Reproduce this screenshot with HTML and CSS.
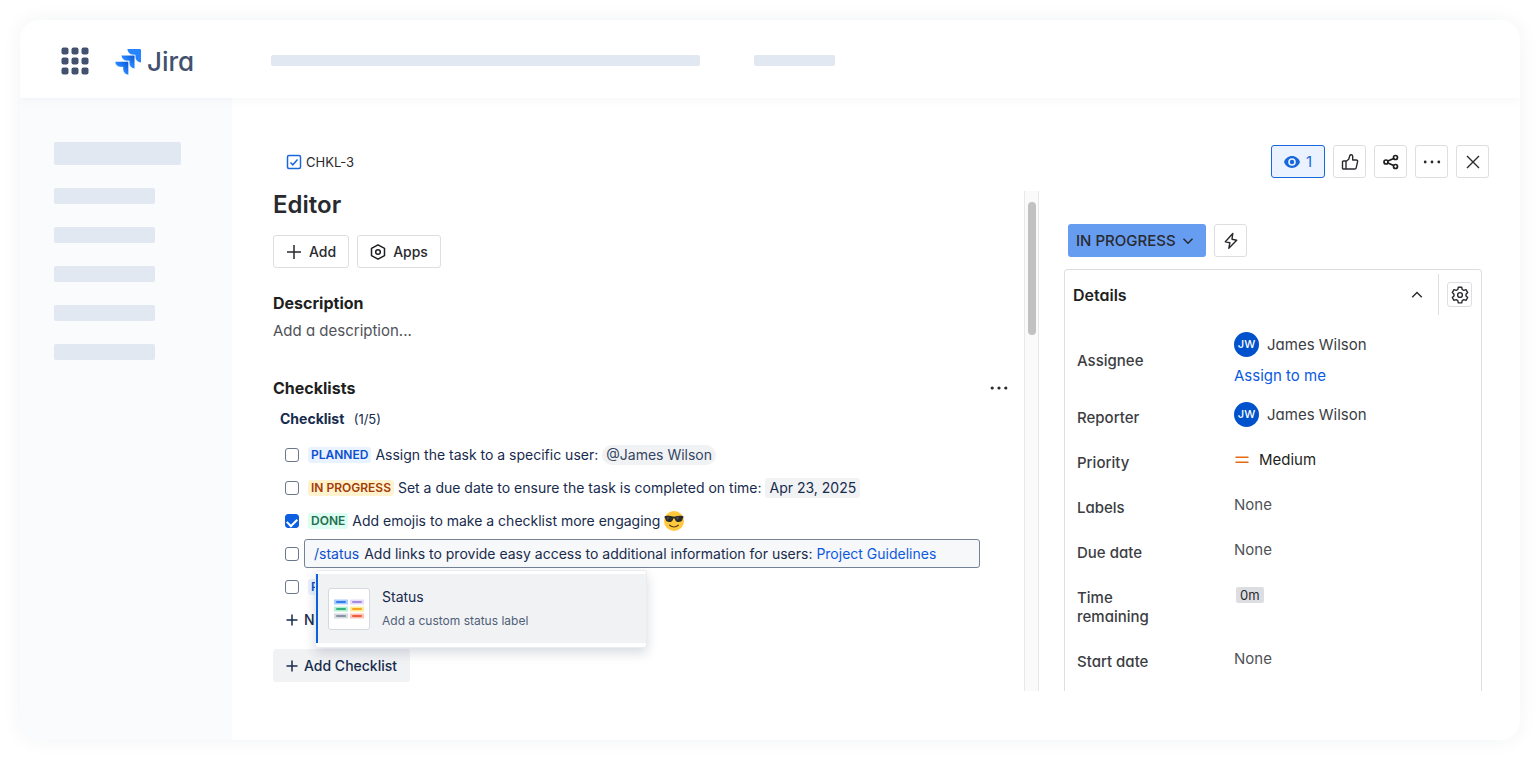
FILE: index.html
```html
<!DOCTYPE html>
<html lang="en">
<head>
<meta charset="utf-8">
<meta name="viewport" content="width=device-width, initial-scale=1">
<title>CHKL-3 Editor - Jira</title>
<link rel="stylesheet" href="styles.css">
</head>
<body>
<div class="frame">
  <header class="topbar">
    <button class="switcher" aria-label="App switcher">
      <svg width="28" height="28" viewBox="0 0 28 28" fill="#42526e">
        <rect x="0.5" y="0.5" width="7" height="7" rx="2"/><rect x="10.5" y="0.5" width="7" height="7" rx="2"/><rect x="20.5" y="0.5" width="7" height="7" rx="2"/>
        <rect x="0.5" y="10.5" width="7" height="7" rx="2"/><rect x="10.5" y="10.5" width="7" height="7" rx="2"/><rect x="20.5" y="10.5" width="7" height="7" rx="2"/>
        <rect x="0.5" y="20.5" width="7" height="7" rx="2"/><rect x="10.5" y="20.5" width="7" height="7" rx="2"/><rect x="20.5" y="20.5" width="7" height="7" rx="2"/>
      </svg>
    </button>
    <a class="logo" href="#">
      <svg width="26" height="26" viewBox="0 0 24 24" aria-hidden="true">
        <defs>
          <linearGradient id="g1" x1="18" y1="6" x2="12.500" y2="12" gradientUnits="userSpaceOnUse"><stop offset="0.150" stop-color="#0f5bd6"/><stop offset="1" stop-color="#2684ff"/></linearGradient>
          <linearGradient id="g2" x1="12.500" y1="12" x2="6" y2="18" gradientUnits="userSpaceOnUse"><stop offset="0.150" stop-color="#0f5bd6"/><stop offset="1" stop-color="#2684ff"/></linearGradient>
        </defs>
        <path fill="#2684ff" d="M23.013 0H11.455a5.215 5.215 0 0 0 5.215 5.215h2.129v2.057A5.215 5.215 0 0 0 24 12.483V1.005A1.001 1.001 0 0 0 23.013 0Z"/>
        <path fill="url(#g1)" stroke="#fff" stroke-width="0.500" d="M17.294 5.757H5.736a5.215 5.215 0 0 0 5.215 5.214h2.129v2.058a5.218 5.218 0 0 0 5.215 5.214V6.758a1.001 1.001 0 0 0-1.001-1.001z"/>
        <path fill="url(#g2)" stroke="#fff" stroke-width="0.500" d="M11.571 11.513H0a5.218 5.218 0 0 0 5.232 5.215h2.130v2.057A5.215 5.215 0 0 0 12.575 24V12.518a1.005 1.005 0 0 0-1.005-1.005z"/>
      </svg>
      <span>Jira</span>
    </a>
    <span class="bar bar-search"></span>
    <span class="bar bar-menu"></span>
  </header>

  <div class="body">
    <nav class="sidebar" aria-label="Project">
      <span class="bar bar-title"></span>
      <span class="bar bar-item"></span>
      <span class="bar bar-item"></span>
      <span class="bar bar-item"></span>
      <span class="bar bar-item"></span>
      <span class="bar bar-item"></span>
    </nav>

    <main class="issue">
      <div class="issue-top">
        <a class="issue-key" href="#">
          <svg width="16" height="16" viewBox="0 0 16 16" fill="none" stroke="#1868db"><rect x="1.500" y="1.500" width="13" height="13" rx="1.500" stroke-width="1.500"/><path d="M4.500 8.500l2.300 2.300L11.500 5.500" stroke-width="1.500"/></svg>
          CHKL-3
        </a>
        <div class="actions">
          <button class="btn watch" aria-label="Watchers: 1">
            <svg width="16" height="16" viewBox="0 0 16 16"><path fill="#1868db" fill-rule="evenodd" d="M8 2C4.200 2 1.300 4.600.200 7.400a1.600 1.600 0 0 0 0 1.200C1.300 11.400 4.200 14 8 14s6.700-2.600 7.800-5.400a1.600 1.600 0 0 0 0-1.200C14.700 4.600 11.800 2 8 2zm0 2.200a3.800 3.800 0 1 1 0 7.600 3.800 3.800 0 0 1 0-7.600z"/><circle cx="8" cy="8" r="2.200" fill="#1868db"/></svg>
            <span>1</span>
          </button>
          <button class="btn square" aria-label="Vote">
            <svg width="18" height="18" viewBox="0 0 18 18" fill="none" stroke="#292a2e" stroke-width="1.400" stroke-linejoin="round"><path d="M1.500 9a1 1 0 0 1 1-1H5v8H2.500a1 1 0 0 1-1-1zM5 8.500l2.700-2.200 1.100-3.600a1.500 1.500 0 0 1 2.900.500V7h3.600a1.300 1.300 0 0 1 1.300 1.600l-1.400 6.200A1.500 1.500 0 0 1 13.700 16H5"/></svg>
          </button>
          <button class="btn square" aria-label="Share">
            <svg width="16" height="16" viewBox="0 0 16 16" fill="none" stroke="#1e1f21" stroke-width="1.700"><circle cx="3" cy="8" r="2"/><circle cx="12.500" cy="3.500" r="2"/><circle cx="12.500" cy="12.500" r="2"/><path d="M4.900 7.100l5.800-2.700M4.900 8.900l5.800 2.700"/></svg>
          </button>
          <button class="btn square" aria-label="More actions">
            <svg width="18" height="18" viewBox="0 0 18 18" fill="#292a2e"><circle cx="2.200" cy="9" r="1.400"/><circle cx="9" cy="9" r="1.400"/><circle cx="15.800" cy="9" r="1.400"/></svg>
          </button>
          <button class="btn square" aria-label="Close">
            <svg width="14" height="14" viewBox="0 0 14 14" stroke="#292a2e" stroke-width="1.400"><path d="M1 1l12 12M13 1L1 13"/></svg>
          </button>
        </div>
      </div>

      <div class="columns">
        <section class="work">
          <h1>Editor</h1>
          <div class="buttons">
            <button class="btn labelled">
              <svg width="16" height="16" viewBox="0 0 16 16" stroke="#292a2e" stroke-width="1.500"><path d="M8 1v14M1 8h14"/></svg>
              Add
            </button>
            <button class="btn labelled">
              <svg width="16" height="16" viewBox="0 0 16 16" fill="none" stroke="#1e1f21" stroke-width="1.500" stroke-linejoin="round"><path d="M8 .8l6.500 3.600v7.200L8 15.200 1.500 11.600V4.400z"/><circle cx="8" cy="8" r="2.300"/></svg>
              Apps
            </button>
          </div>

          <h2>Description</h2>
          <p class="placeholder">Add a description...</p>

          <div class="section-head">
            <h2>Checklists</h2>
            <button class="plain" aria-label="Checklist actions">
              <svg width="18" height="18" viewBox="0 0 18 18" fill="#292a2e"><circle cx="2.200" cy="9" r="1.600"/><circle cx="9" cy="9" r="1.600"/><circle cx="15.800" cy="9" r="1.600"/></svg>
            </button>
          </div>

          <div class="checklist">
            <h3>Checklist <span class="count">(1/5)</span></h3>
            <ul>
              <li>
                <input type="checkbox" id="c1">
                <label for="c1"><span class="tag planned">PLANNED</span>Assign the task to a specific user: <span class="mention">@James Wilson</span></label>
              </li>
              <li>
                <input type="checkbox" id="c2">
                <label for="c2"><span class="tag progress">IN PROGRESS</span>Set a due date to ensure the task is completed on time: <span class="date">Apr 23, 2025</span></label>
              </li>
              <li>
                <input type="checkbox" id="c3" checked>
                <label for="c3"><span class="tag done">DONE</span>Add emojis to make a checklist more engaging
                  <svg class="emoji" role="img" aria-label="Smiling face with sunglasses" width="20" height="20" viewBox="0 0 20 20"><circle cx="10" cy="10" r="10" fill="#ffc83d"/><path d="M.600 5.200c3-.700 6-.500 8.300.300.700.200 1.500.200 2.200 0 2.300-.800 5.300-1 8.300-.300v1.500c-.5.300-.7.800-.8 1.400-.4 2.200-1.700 3-3.900 3-2.300 0-3.300-1.200-3.900-3.200-.2-.8-1.400-.8-1.600 0-.6 2-1.600 3.200-3.900 3.200-2.200 0-3.500-.8-3.900-3-.1-.6-.3-1.100-.8-1.400z" fill="#2b2b2b"/><path d="M3 6.500l2.500-.4-2 3zM12.500 6.500l2.500-.4-2 3z" fill="#5c5c5c"/><path d="M5.700 14.200c2.500 2.100 6.100 2.100 8.600 0" fill="none" stroke="#5a3b1a" stroke-width="1.200" stroke-linecap="round"/></svg></label>
              </li>
              <li class="editing">
                <input type="checkbox" id="c4" aria-label="Add links">
                <div class="field" role="textbox" contenteditable="true" aria-label="Checklist item"><span class="command">/status</span>Add links to provide easy access to additional information for users: <a href="#">Project Guidelines</a></div>
                <div class="popup" role="listbox">
                  <div class="option" role="option" aria-selected="true">
                    <span class="thumb">
                      <svg width="30" height="20" viewBox="0 0 30 20">
                        <rect width="14" height="5" y="0.500" fill="#a8ccff"/><rect x="2" y="2" width="10" height="2" rx="1" fill="#357de8"/>
                        <rect x="16" width="14" height="5" y="0.500" fill="#e5dcfb"/><rect x="18" y="2" width="10" height="2" rx="1" fill="#a58be6"/>
                        <rect width="14" height="5" y="7.500" fill="#b5f0d5"/><rect x="2" y="9" width="10" height="2" rx="1" fill="#36b37e"/>
                        <rect x="16" width="14" height="5" y="7.500" fill="#ffeb9c"/><rect x="18" y="9" width="10" height="2" rx="1" fill="#f5a623"/>
                        <rect width="14" height="5" y="14.500" fill="#d5d9e0"/><rect x="2" y="16" width="10" height="2" rx="1" fill="#8993a5"/>
                        <rect x="16" width="14" height="5" y="14.500" fill="#ffc2b5"/><rect x="18" y="16" width="10" height="2" rx="1" fill="#f15b3e"/>
                      </svg>
                    </span>
                    <span class="option-text"><span class="option-name">Status</span><span class="option-hint">Add a custom status label</span></span>
                  </div>
                </div>
              </li>
              <li>
                <input type="checkbox" id="c5">
                <label for="c5"><span class="tag planned">PLANNED</span></label>
              </li>
            </ul>
            <button class="plain new-item">
              <svg width="12" height="12" viewBox="0 0 12 12" stroke="#172b4d" stroke-width="1.500"><path d="M6 .5v11M.5 6h11"/></svg>
              New item
            </button>
          </div>
          <button class="add-checklist">
            <svg width="12" height="12" viewBox="0 0 12 12" stroke="#172b4d" stroke-width="1.500"><path d="M6 .5v11M.5 6h11"/></svg>
            Add Checklist
          </button>
        </section>

        <div class="scroll-track" aria-hidden="true"><div class="scroll-thumb"></div></div>

        <aside class="side">
          <div class="status-row">
            <div class="status">
              <select aria-label="Status"><option>IN PROGRESS</option></select>
              <svg width="12" height="12" viewBox="0 0 12 12" fill="none" stroke="#292a2e" stroke-width="1.500"><path d="M1.500 3.800L6 8.300l4.500-4.500"/></svg>
            </div>
            <button class="btn square" aria-label="Automation">
              <svg width="16" height="18" viewBox="0 0 16 18" fill="none" stroke="#292a2e" stroke-width="1.400" stroke-linejoin="round"><path d="M9.800 1.500L2.300 9.700l4.600 1L5.800 16.300 13.700 8.200 9 7.200z"/></svg>
            </button>
          </div>
          <section class="details">
            <header class="details-head">
              <h2>Details</h2>
              <button class="plain" aria-label="Collapse details"><svg width="12" height="12" viewBox="0 0 12 12" fill="none" stroke="#292a2e" stroke-width="1.400"><path d="M1.200 8.200L6 3.400l4.800 4.800"/></svg></button>
              <span class="divider"></span>
              <button class="btn gear" aria-label="Configure">
                <svg width="18" height="18" viewBox="0 0 18 18" fill="none" stroke="#292a2e" stroke-width="1.400" stroke-linejoin="round"><path d="M7.300 1.200h3.400l.5 2.300 1.600.900 2.200-.700 1.700 2.900-1.700 1.600v1.700l1.700 1.600-1.700 2.900-2.200-.700-1.600.900-.5 2.300H7.300l-.5-2.300-1.600-.900-2.200.700-1.700-2.900L3 9.900V8.200L1.300 6.600 3 3.700l2.200.700 1.600-.900z"/><circle cx="9" cy="9" r="2.400"/></svg>
              </button>
            </header>
            <dl>
              <div class="assignee">
                <dt>Assignee</dt>
                <dd><span class="user"><span class="avatar">JW</span>James Wilson</span><a href="#">Assign to me</a></dd>
              </div>
              <div><dt>Reporter</dt><dd><span class="user"><span class="avatar">JW</span>James Wilson</span></dd></div>
              <div><dt>Priority</dt><dd class="priority"><svg width="16" height="16" viewBox="0 0 16 16" stroke="#e56910" stroke-width="1.600"><path d="M1.500 5.200h13M1.500 10.200h13"/></svg>Medium</dd></div>
              <div><dt>Labels</dt><dd class="none">None</dd></div>
              <div><dt>Due date</dt><dd class="none">None</dd></div>
              <div><dt>Time remaining</dt><dd><span class="time">0m</span></dd></div>
              <div><dt>Start date</dt><dd class="none">None</dd></div>
            </dl>
          </section>
        </aside>
      </div>
    </main>
  </div>
</div>
</body>
</html>
```
FILE: styles.css
```css
* { box-sizing: border-box; }

body {
  margin: 0;
  padding: 20px;
  background: #fff;
  color: #292a2e;
  font: 15px/20px Inter, "Liberation Sans", sans-serif;
  font-feature-settings: "cv11";
}

h1, h2, h3, p, ul, dl, dd { margin: 0; }
ul { padding: 0; list-style: none; }
a { color: #0c5ae0; text-decoration: none; }
svg { display: block; flex: none; }
button, select { font: inherit; font-feature-settings: inherit; color: inherit; }

.frame {
  display: flex;
  flex-direction: column;
  min-height: calc(100vh - 40px);
  border-radius: 20px;
  background: #fff;
  box-shadow: 0 0 20px rgba(23, 43, 77, 0.06);
  overflow: clip;
}

.bar { display: block; border-radius: 2px; background: #e1e8f2; }

.topbar {
  position: relative;
  display: flex;
  align-items: center;
  height: 78px;
  padding: 3px 41px 0;
  box-shadow: 0 0 12px rgba(23, 43, 77, 0.05);
}
.switcher { padding: 0; border: 0; background: none; }
.logo {
  display: flex;
  align-items: center;
  gap: 6px;
  width: 156px;
  margin-left: 26px;
  padding-top: 2px;
  color: #42526e;
  font-size: 26px;
  line-height: 32px;
  font-weight: 500;
}
.bar-search { width: 429px; height: 11px; margin-right: 54px; }
.bar-menu { width: 81px; height: 11px; }

.body { display: flex; flex: 1; }
.sidebar {
  display: flex;
  flex-direction: column;
  gap: 23px;
  flex: 0 0 212px;
  padding: 44px 34px;
  background: #fafbfd;
}
.bar-title { width: 127px; height: 23px; }
.bar-item { width: 101px; height: 16px; }

.issue {
  display: flex;
  flex-direction: column;
  flex: 1;
  min-width: 0;
  padding: 47px 31px 49px 41px;
}
.issue-top { display: flex; justify-content: space-between; align-items: center; }
.issue-key {
  display: flex;
  align-items: center;
  gap: 4px;
  margin-left: 13px;
  color: #292a2e;
  font-size: 13px;
}
.actions { display: flex; gap: 8px; }

.btn {
  display: flex;
  align-items: center;
  justify-content: center;
  height: 33px;
  padding: 0;
  border: 1px solid #dddee1;
  border-radius: 3px;
  background: #fff;
  font-weight: 500;
}
.square { width: 33px; }
.watch {
  gap: 6px;
  width: 54px;
  border-color: #1868db;
  background: #e9f2fe;
  color: #1868db;
  font-weight: 400;
}
.plain { display: flex; align-items: center; padding: 0; border: 0; background: none; }

.columns { display: flex; flex: 1; margin-top: 13px; }

.work {
  display: flex;
  flex-direction: column;
  flex: 1;
  min-width: 0;
  padding-right: 16px;
}
h1 { font-size: 24px; line-height: 28px; font-weight: 600; color: #292a2e; }
h2 { font-size: 16px; line-height: 24px; font-weight: 700; color: #1e1f21; }
.buttons { display: flex; gap: 8px; margin: 16px 0 23px; }
.labelled { gap: 7px; padding: 0 12px; font-size: 14px; }
.placeholder { margin-top: 6px; color: #505258; }
.section-head {
  display: flex;
  justify-content: space-between;
  align-items: center;
  margin-top: 35px;
}

.checklist {
  color: #172b4d;
  font-size: 14px;
  font-feature-settings: normal;
}
h3 { padding: 9px 7px; font-size: 14px; line-height: 20px; font-weight: 700; }
.count { margin-left: 6px; font-size: 13px; font-weight: 400; }
.checklist li {
  position: relative;
  display: flex;
  align-items: center;
  gap: 9px;
  height: 33px;
  padding: 0 28px 0 12px;
}
.checklist input {
  appearance: none;
  display: grid;
  justify-content: center;
  flex: none;
  width: 14px;
  height: 14px;
  margin: 0;
  border: 1px solid #6b778c;
  border-radius: 3px;
  background: #fff;
}
.checklist input:checked {
  border-color: #0c5fe0;
  background: #0c5fe0;
}
.checklist input:checked::before {
  content: "";
  width: 8px;
  height: 5px;
  margin-top: 3px;
  border: solid #fff;
  border-width: 0 0 2px 2px;
  transform: rotate(-45deg);
}
label { display: flex; align-items: center; gap: 4px; white-space: nowrap; }
.tag {
  padding: 0 3px;
  border-radius: 3px;
  font-size: 12px;
  line-height: 16px;
  font-weight: 600;
}
.planned { background: #e9f2ff; color: #0c4fd0; }
.progress { background: #fff3cf; color: #a53c05; }
.done { background: #dcfff1; color: #216e4e; }
.mention { padding: 0 4px; border-radius: 10px; background: #f1f2f4; color: #344563; }
.date { padding: 0 4px; border-radius: 3px; background: #f1f2f4; }

.checklist .editing { gap: 5px; }
.field {
  flex: 1;
  height: 29px;
  padding: 4px 9px;
  border: 1px solid #758195;
  border-radius: 3px;
  background: #f7f8f9;
  line-height: 20px;
  white-space: nowrap;
}
.command { margin-right: 5px; color: #0c4fd0; }

/* Slash-command suggestions, opened below the edited item */
.popup {
  position: absolute;
  z-index: 1;
  top: 33px;
  left: 42px;
  width: 332px;
  padding: 3px 0 4px;
  border: 1px solid #ebecf0;
  border-radius: 3px;
  background: #fff;
  box-shadow: 0 5px 12px rgba(9, 30, 66, 0.16);
}
.option {
  display: flex;
  align-items: center;
  gap: 12px;
  height: 69px;
  padding-left: 10px;
  border-left: 2px solid #0c5fe0;
  background: #f1f2f4;
}
.thumb {
  display: flex;
  align-items: center;
  justify-content: center;
  width: 42px;
  height: 42px;
  border: 1px solid #d5d8df;
  border-radius: 3px;
  background: #fff;
}
.option-text { display: flex; flex-direction: column; gap: 4px; }
.option-hint { color: #505f79; font-size: 12px; }

.new-item { gap: 6px; height: 33px; margin-left: 13px; font-weight: 500; }
.add-checklist {
  display: flex;
  align-items: center;
  align-self: flex-start;
  gap: 6px;
  height: 33px;
  margin-top: 13px;
  padding: 0 13px;
  border: 0;
  border-radius: 3px;
  background: #f1f2f4;
  color: #172b4d;
  font-size: 14px;
  font-weight: 500;
  font-feature-settings: normal;
}

.scroll-track {
  width: 15px;
  padding: 11px 3px;
  border: solid #e8e8e8;
  border-width: 0 1px;
  background: #fafafa;
}
.scroll-thumb { width: 8px; height: 133px; border-radius: 4px; background: #c1c1c1; }

.side {
  display: flex;
  flex-direction: column;
  flex: 0 0 418px;
  margin: 33px 7px 0 25px;
}
.status-row { display: flex; gap: 8px; margin: 0 0 12px 4px; }
.status { display: grid; width: 138px; height: 33px; align-items: center; }
.status select {
  grid-area: 1 / 1;
  width: 100%;
  height: 100%;
  padding: 0 8px;
  border: 0;
  border-radius: 3px;
  background: #669df1;
  font-weight: 500;
  appearance: none;
}
.status svg { grid-area: 1 / 1; justify-self: end; margin-right: 12px; pointer-events: none; }

.details {
  flex: 1;
  border: 1px solid #dddee1;
  border-bottom: 0;
  border-radius: 4px 4px 0 0;
}
.details-head { display: flex; align-items: center; padding: 4px 9px 0 8px; }
.details-head h2 { flex: 1; font-weight: 600; }
.divider { width: 1px; height: 41px; margin: 0 8px 0 15px; background: #dddee1; }
.gear { width: 25px; height: 25px; }

dl { display: flex; flex-direction: column; gap: 20px; padding: 17px 12px 0; }
dl > div { display: grid; grid-template-columns: 157px 1fr; align-items: start; }
dt {
  width: 100px;
  padding-top: 6px;
  font-weight: 500;
  line-height: 19px;
  color: #3b3d42;
}
dd { line-height: 25px; }
dl .assignee { align-items: center; margin-bottom: -6px; }
.assignee dt { padding: 0; }
.assignee dd { display: flex; flex-direction: column; gap: 6px; align-items: flex-start; }
.user { display: flex; align-items: center; gap: 8px; color: #3b3d42; }
.avatar {
  width: 25px;
  height: 25px;
  border-radius: 50%;
  background: #0052cc;
  color: #fff;
  font-size: 11px;
  font-weight: 500;
  text-align: center;
}
.priority { display: flex; align-items: center; gap: 9px; color: #1e1f21; }
.none { color: #505258; }
.time {
  display: inline-block;
  margin-left: 2px;
  padding: 0 4px;
  border-radius: 2px;
  background: #dddee1;
  font-size: 13px;
  line-height: 16px;
}
```
